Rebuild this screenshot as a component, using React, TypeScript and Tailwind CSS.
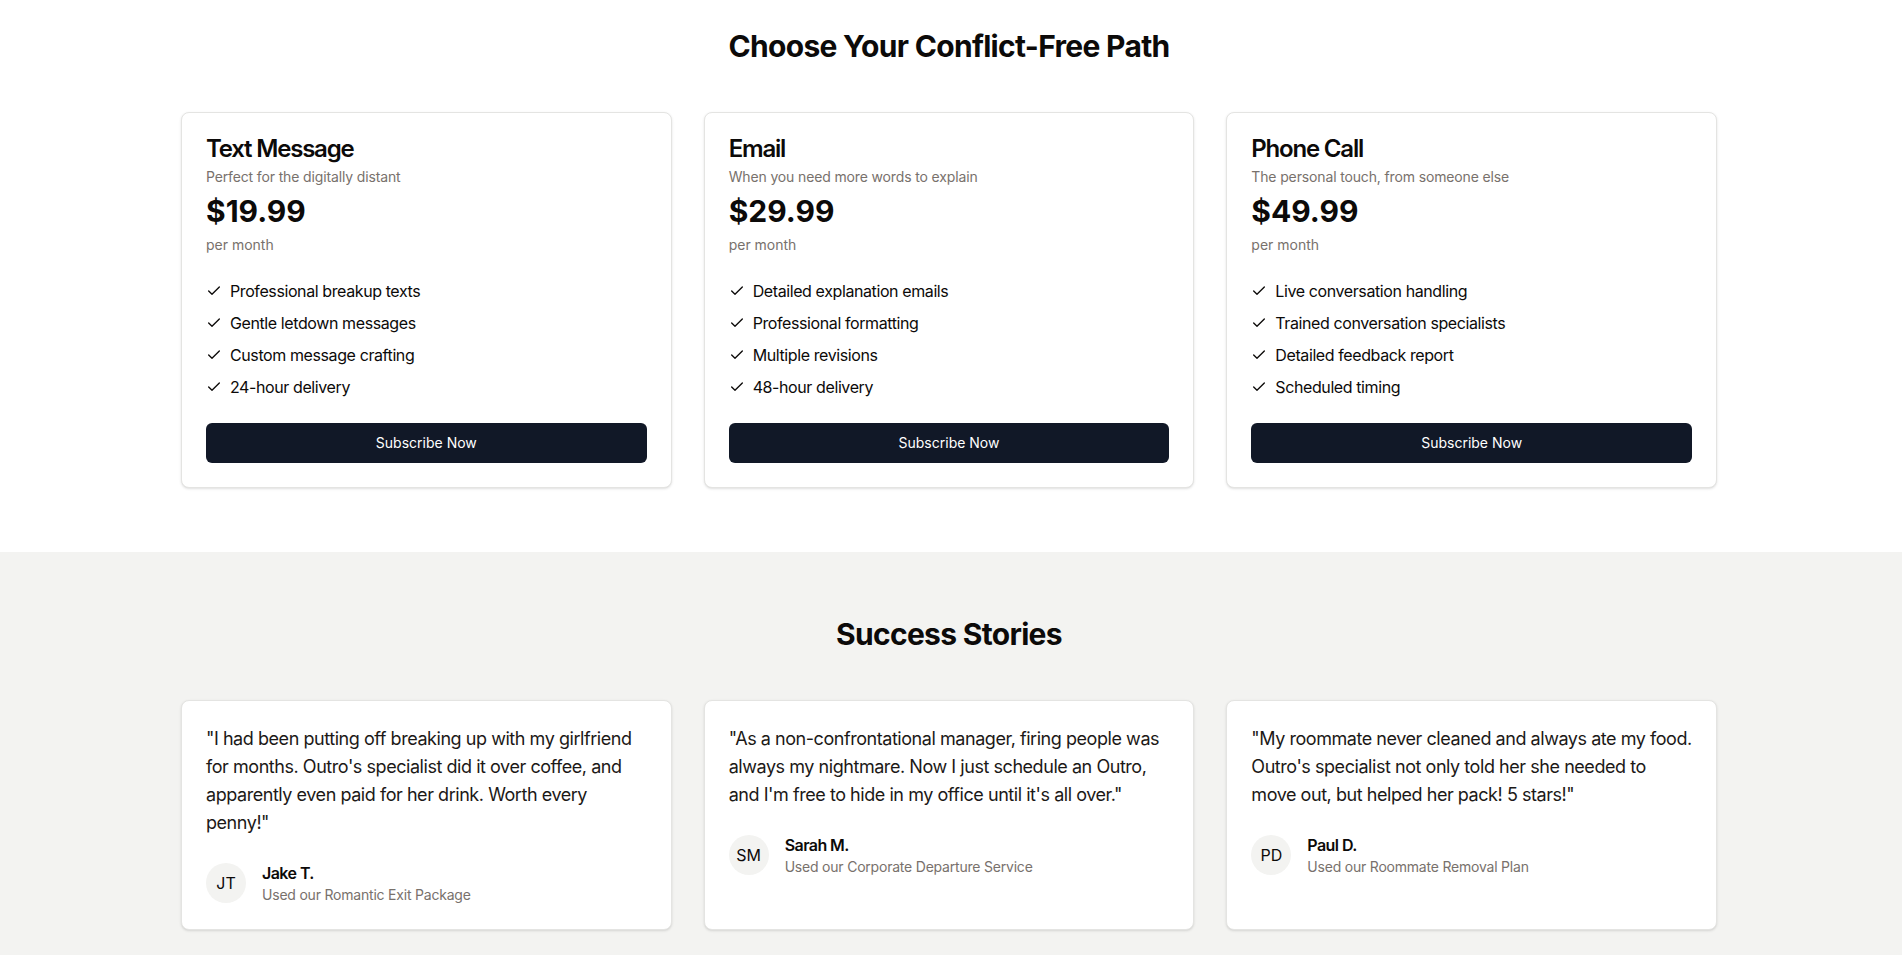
import { Check } from "lucide-react";

interface Plan {
  name: string;
  tagline: string;
  price: string;
  features: string[];
}

interface Story {
  quote: string;
  initials: string;
  name: string;
  service: string;
}

const plans: Plan[] = [
  {
    name: "Text Message",
    tagline: "Perfect for the digitally distant",
    price: "$19.99",
    features: ["Professional breakup texts", "Gentle letdown messages", "Custom message crafting", "24-hour delivery"],
  },
  {
    name: "Email",
    tagline: "When you need more words to explain",
    price: "$29.99",
    features: ["Detailed explanation emails", "Professional formatting", "Multiple revisions", "48-hour delivery"],
  },
  {
    name: "Phone Call",
    tagline: "The personal touch, from someone else",
    price: "$49.99",
    features: ["Live conversation handling", "Trained conversation specialists", "Detailed feedback report", "Scheduled timing"],
  },
];

const stories: Story[] = [
  {
    quote:
      "\"I had been putting off breaking up with my girlfriend for months. Outro's specialist did it over coffee, and apparently even paid for her drink. Worth every penny!\"",
    initials: "JT",
    name: "Jake T.",
    service: "Used our Romantic Exit Package",
  },
  {
    quote:
      "\"As a non-confrontational manager, firing people was always my nightmare. Now I just schedule an Outro, and I'm free to hide in my office until it's all over.\"",
    initials: "SM",
    name: "Sarah M.",
    service: "Used our Corporate Departure Service",
  },
  {
    quote:
      "\"My roommate never cleaned and always ate my food. Outro's specialist not only told her she needed to move out, but helped her pack! 5 stars!\"",
    initials: "PD",
    name: "Paul D.",
    service: "Used our Roommate Removal Plan",
  },
];

function PlanCard({ plan }: { plan: Plan }) {
  return (
    <div className="rounded-lg border border-[#e4e4e2] bg-white shadow-sm">
      <div className="flex flex-col gap-1.5 p-6">
        <h3 className="text-2xl font-semibold leading-none tracking-[-0.05em] text-[#0c0a09]">{plan.name}</h3>
        <p className="text-sm tracking-[-0.01em] text-[#78716c]">{plan.tagline}</p>
        <div>
          <div className="text-3xl font-bold text-[#0c0a09]">{plan.price}</div>
          <p className="mt-1.5 text-sm text-[#78716c]">per month</p>
        </div>
      </div>
      <div className="px-6 pb-6">
        <ul className="flex flex-col gap-2">
          {plan.features.map((f) => (
            <li key={f} className="flex items-center text-base tracking-[-0.025em] text-[#0c0a09]">
              <Check className="mr-2 h-4 w-4" strokeWidth={2} />
              {f}
            </li>
          ))}
        </ul>
      </div>
      <div className="px-6 pb-6">
        <button className="inline-flex h-10 w-full items-center justify-center rounded-md bg-[#111827] text-sm text-white">
          Subscribe Now
        </button>
      </div>
    </div>
  );
}

function StoryCard({ story }: { story: Story }) {
  return (
    <div className="rounded-lg border border-[#e4e4e2] bg-white p-6 shadow-sm">
      <p className="text-lg tracking-[-0.025em] text-[#1c1917]">{story.quote}</p>
      <div className="mt-6 flex items-center gap-4">
        <div className="flex h-10 w-10 items-center justify-center rounded-full bg-[#f3f3f1] text-base text-[#0c0a09]">
          {story.initials}
        </div>
        <div>
          <p className="font-semibold tracking-[-0.035em] text-[#0c0a09]">{story.name}</p>
          <p className="text-sm tracking-[-0.015em] text-[#78716c]">{story.service}</p>
        </div>
      </div>
    </div>
  );
}

export default function App() {
  return (
    <div className="min-h-screen bg-white font-['Inter','Liberation_Sans',sans-serif]">
      <section className="bg-white pt-7 pb-16 pr-1">
        <div className="mx-auto max-w-[1536px]">
          <h2 className="mb-12 text-center text-3xl font-bold tracking-[-0.023em] text-[#0c0a09]">
            Choose Your Conflict-Free Path
          </h2>
          <div className="grid grid-cols-3 gap-8">
            {plans.map((p) => (
              <PlanCard key={p.name} plan={p} />
            ))}
          </div>
        </div>
      </section>
      <section className="bg-[#f3f3f1] py-16 pr-1">
        <div className="mx-auto max-w-[1536px]">
          <h2 className="mb-12 text-center text-3xl font-bold tracking-[-0.023em] text-[#0c0a09]">Success Stories</h2>
          <div className="grid grid-cols-3 gap-8">
            {stories.map((s) => (
              <StoryCard key={s.name} story={s} />
            ))}
          </div>
        </div>
      </section>
    </div>
  );
}
